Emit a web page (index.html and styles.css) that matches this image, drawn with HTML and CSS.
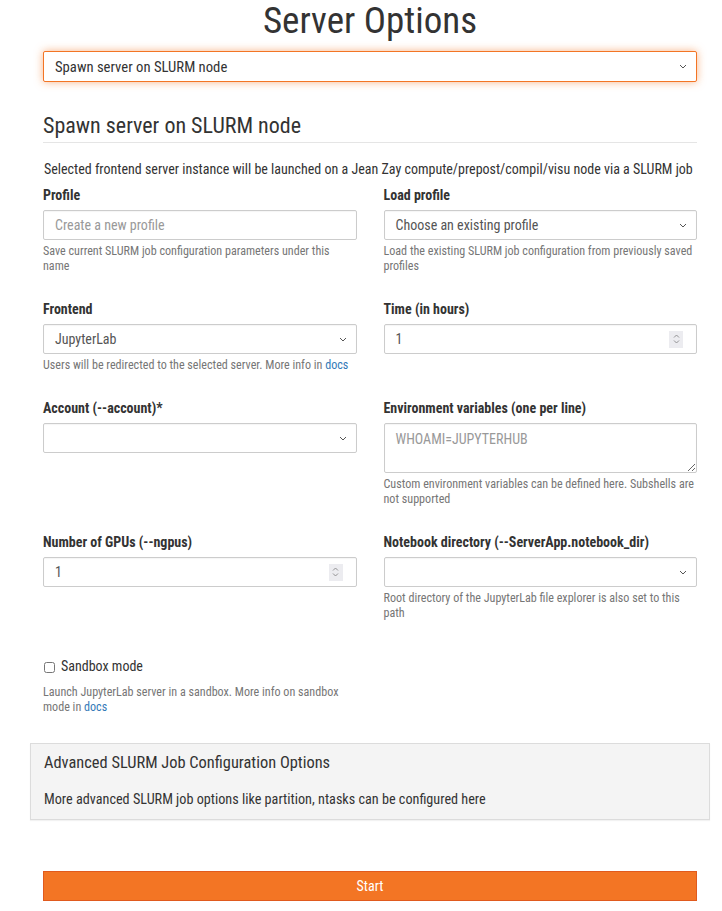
FILE: index.html
```html
<!DOCTYPE html>
<html lang="en">
<head>
<meta charset="utf-8">
<title>Server Options</title>
<link rel="stylesheet" href="styles.css">
</head>
<body>
<div class="page">
  <h1 class="title">Server Options</h1>

  <div class="control select focused">
    <span class="value">Spawn server on SLURM node</span>
    <svg class="chev" width="8" height="5" viewBox="0 0 8 5"><path d="M1 1 L4 4 L7 1" fill="none" stroke="#555" stroke-width="1"/></svg>
  </div>

  <h3 class="section-title">Spawn server on SLURM node</h3>
  <hr class="rule">
  <p class="lead-text">Selected frontend server instance will be launched on a Jean Zay compute/prepost/compil/visu node via a SLURM job</p>

  <div class="grid">
    <div class="group">
      <label class="lbl">Profile</label>
      <input class="control text-input" type="text" placeholder="Create a new profile">
      <p class="help">Save current SLURM job configuration parameters under this name</p>
    </div>
    <div class="group">
      <label class="lbl">Load profile</label>
      <div class="control select">
        <span class="value">Choose an existing profile</span>
        <svg class="chev" width="8" height="5" viewBox="0 0 8 5"><path d="M1 1 L4 4 L7 1" fill="none" stroke="#555" stroke-width="1"/></svg>
      </div>
      <p class="help">Load the existing SLURM job configuration from previously saved profiles</p>
    </div>

    <div class="group">
      <label class="lbl">Frontend</label>
      <div class="control select">
        <span class="value">JupyterLab</span>
        <svg class="chev" width="8" height="5" viewBox="0 0 8 5"><path d="M1 1 L4 4 L7 1" fill="none" stroke="#555" stroke-width="1"/></svg>
      </div>
      <p class="help">Users will be redirected to the selected server. More info in <a href="#">docs</a></p>
    </div>
    <div class="group">
      <label class="lbl">Time (in hours)</label>
      <div class="control number">
        <span class="value">1</span>
        <span class="spin"><svg width="7" height="12" viewBox="0 0 7 12"><path d="M1 4.5 L3.5 2 L6 4.5 M1 7.5 L3.5 10 L6 7.5" fill="none" stroke="#888" stroke-width="0.9"/></svg></span>
      </div>
    </div>

    <div class="group">
      <label class="lbl">Account (--account)*</label>
      <div class="control select">
        <span class="value"></span>
        <svg class="chev" width="8" height="5" viewBox="0 0 8 5"><path d="M1 1 L4 4 L7 1" fill="none" stroke="#555" stroke-width="1"/></svg>
      </div>
    </div>
    <div class="group">
      <label class="lbl">Environment variables (one per line)</label>
      <textarea class="control area" placeholder="WHOAMI=JUPYTERHUB"></textarea>
      <p class="help">Custom environment variables can be defined here. Subshells are not supported</p>
    </div>

    <div class="group">
      <label class="lbl">Number of GPUs (--ngpus)</label>
      <div class="control number">
        <span class="value">1</span>
        <span class="spin"><svg width="7" height="12" viewBox="0 0 7 12"><path d="M1 4.5 L3.5 2 L6 4.5 M1 7.5 L3.5 10 L6 7.5" fill="none" stroke="#888" stroke-width="0.9"/></svg></span>
      </div>
    </div>
    <div class="group">
      <label class="lbl">Notebook directory (--ServerApp.notebook_dir)</label>
      <div class="control select">
        <span class="value"></span>
        <svg class="chev" width="8" height="5" viewBox="0 0 8 5"><path d="M1 1 L4 4 L7 1" fill="none" stroke="#555" stroke-width="1"/></svg>
      </div>
      <p class="help">Root directory of the JupyterLab file explorer is also set to this path</p>
    </div>

    <div class="group checkbox-group">
      <label class="check"><input type="checkbox"><span>Sandbox mode</span></label>
      <p class="help">Launch JupyterLab server in a sandbox. More info on sandbox mode in <a href="#">docs</a></p>
    </div>
  </div>

  <div class="panel">
    <div class="panel-heading">Advanced SLURM Job Configuration Options</div>
    <div class="panel-body">More advanced SLURM job options like partition, ntasks can be configured here</div>
  </div>

  <button class="start" type="button">Start</button>
</div>
</body>
</html>
```
FILE: styles.css
```css
html, body {
  margin: 0;
  padding: 0;
  background: #fff;
}
body {
  font-family: "Roboto Condensed", "Liberation Sans", Arial, sans-serif;
  font-size: 14px;
  line-height: 20px;
  color: #333;
}
.page {
  width: 654px;
  margin-left: 43px;
  display: flex;
  flex-direction: column;
}
.title {
  margin: 1px 0 0;
  font-size: 37px;
  line-height: 40px;
  font-weight: 400;
  text-align: center;
  color: #333;
}
.control {
  box-sizing: border-box;
  height: 30px;
  border: 1px solid #ccc;
  border-radius: 2px;
  background: #fff;
  font-family: inherit;
  font-size: 14px;
  color: #555;
  padding: 0 11px;
  display: flex;
  align-items: center;
  justify-content: space-between;
  box-shadow: inset 0 1px 1px rgba(0,0,0,.04);
}
.control.focused {
  margin-top: 10px;
  height: 31px;
  border-color: #f37524;
  box-shadow: 0 0 8px rgba(243,117,36,.55);
  color: #333;
  font-size: 14.7px;
}
.value { white-space: nowrap; }
.chev { flex: none; margin-right: -2px; }
.text-input { width: 100%; outline: none; }
.text-input::placeholder { color: #999; }
.number .spin {
  width: 14px;
  height: 17px;
  background: #ececf0;
  display: flex;
  align-items: center;
  justify-content: center;
  margin-right: 2px;
}
.area {
  display: block;
  width: 100%;
  height: 50px;
  padding: 5px 11px;
  resize: vertical;
  line-height: 20px;
  outline: none;
}
.area::placeholder { color: #999; }
.section-title {
  margin: 32px 0 0;
  font-size: 22px;
  line-height: 24px;
  font-weight: 400;
  color: #333;
}
.rule {
  margin: 4px 0 0;
  border: 0;
  border-top: 1px solid #e5e5e5;
  height: 0;
}
.lead-text {
  margin: 16px 0 0 1px;
}
.grid {
  margin-top: 6px;
  display: grid;
  grid-template-columns: 1fr 1fr;
  column-gap: 27px;
  row-gap: 25px;
}
.group {
  display: flex;
  flex-direction: column;
  min-width: 0;
}
.lbl {
  font-weight: 700;
  margin-bottom: 5px;
  color: #333;
}
.help {
  margin: 4px 0 0;
  font-size: 12.1px;
  line-height: 15px;
  color: #767676;
}
.help a { color: #337ab7; text-decoration: none; }
.checkbox-group { margin-top: 10px; }
.check {
  display: flex;
  align-items: center;
  gap: 6px;
  font-size: 14px;
  color: #333;
}
.check input {
  margin: 2px 0 0 1px;
  width: 11px;
  height: 11px;
}
.checkbox-group .help { margin-top: 9px; }
.panel {
  margin: 28px -13px 0;
  border: 1px solid #dcdcdc;
  background: #f4f4f4;
  box-shadow: 0 1px 1px rgba(0,0,0,.05);
}
.panel-heading {
  padding: 10px 13px 0;
  font-size: 16.4px;
  line-height: 18px;
  color: #333;
}
.panel-body {
  padding: 17px 13px 10px;
  font-size: 14.2px;
  color: #333;
}
.start {
  margin-top: 51px;
  height: 30px;
  border: 1px solid #e05a1e;
  background: #f37524;
  color: #fff;
  font-family: inherit;
  font-size: 14px;
  border-radius: 0;
  padding: 0;
}
```
